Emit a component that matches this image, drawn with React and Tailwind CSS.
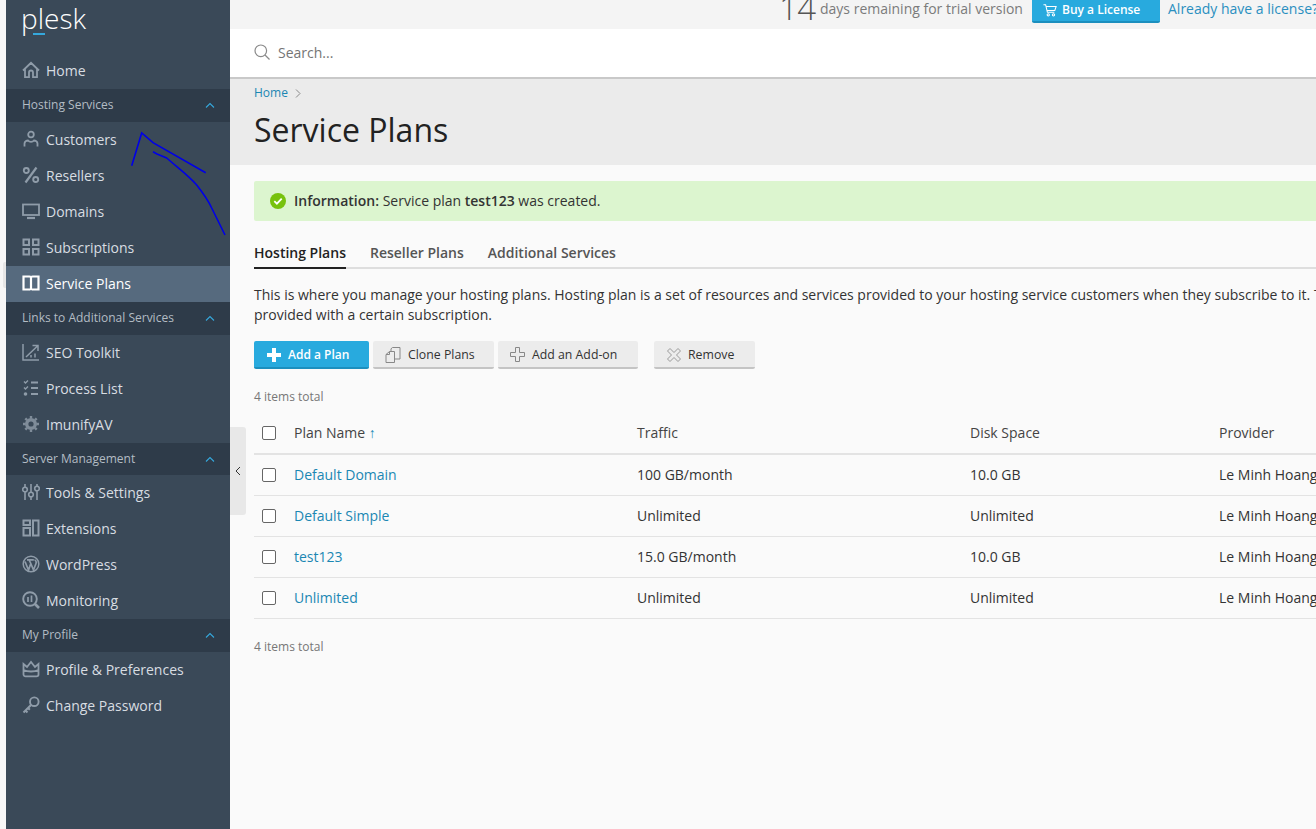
import React from "react";

const ic = { fill: "none", stroke: "#8f9ca9", strokeWidth: 1.8, viewBox: "0 0 18 18", width: 18, height: 18 };

const Icons = {
  home: <svg {...ic}><path d="M1 9.500 9 1.800l8 7.700M3 8v8.200h4v-4.700a2 2 0 0 1 4 0v4.700h4V8" /></svg>,
  user: <svg {...ic}><circle cx="9" cy="4.500" r="2.800" /><path d="M2.500 16.500v-3c0-2 2-3 3.500-3 .8 1 1.800 1.300 3 1.300s2.200-.3 3-1.300c1.500 0 3.500 1 3.500 3v3" /></svg>,
  percent: <svg {...ic} strokeWidth="2.200"><path d="M14.500 1.500 3.500 16.500" /><circle cx="4.300" cy="4.500" r="2.500" strokeWidth="1.900" /><circle cx="13.700" cy="13.500" r="2.500" strokeWidth="1.900" /></svg>,
  monitor: <svg {...ic}><rect x="1" y="2.500" width="16" height="10.500" /><path d="M5 16h8" strokeWidth="2.200" /></svg>,
  grid: <svg {...ic} strokeWidth="2"><rect x="1.500" y="1.500" width="5.500" height="5.500" /><rect x="11" y="1.500" width="5.500" height="5.500" /><rect x="1.500" y="11" width="5.500" height="5.500" /><rect x="11" y="11" width="5.500" height="5.500" /></svg>,
  book: <svg {...ic} stroke="#ffffff" strokeWidth="2.200"><path d="M1.500 2.500h6c.8 0 1.500.5 1.500 1.200 0-.7.700-1.200 1.500-1.200h6v13h-6c-.8 0-1.500.3-1.500.8 0-.5-.7-.8-1.500-.8h-6zM9 3.500v12.500" /></svg>,
  seo: <svg {...ic} strokeWidth="1.500"><path d="M1 1v16h16M4 14 15.500 3M10.500 2.500h5.500V8M9 14.500V12M13 14.500v-4" /></svg>,
  list: <svg {...ic}><path d="m2 2.500 1.500 1.500L6 1.500M2 8.500 3.500 10 6 7.500" strokeWidth="1.400" /><circle cx="3.500" cy="15" r="1.800" fill="#8f9ca9" stroke="none" /><path d="M9 3.500h7M9 9h7M9 15h7" strokeWidth="2" /></svg>,
  gear: <svg {...ic} stroke="#7f8c99"><circle cx="9" cy="9" r="4.300" strokeWidth="3.400" /><path d="M9 1v2.500M9 14.500V17M1 9h2.500M14.500 9H17M3.300 3.300l1.800 1.800M12.900 12.900l1.800 1.800M3.300 14.700l1.800-1.800M12.900 5.100l1.800-1.800" strokeWidth="2.400" /></svg>,
  sliders: <svg {...ic} strokeWidth="1.600"><path d="M3 1v3M3 9v8M9 1v8M9 14v3M15 1v2M15 8v9" /><circle cx="3" cy="6.500" r="2.300" /><circle cx="9" cy="11.500" r="2.300" /><circle cx="15" cy="5.500" r="2.300" /></svg>,
  ext: <svg {...ic} strokeWidth="2"><rect x="1.500" y="1.500" width="6.500" height="4.500" /><rect x="1.500" y="9" width="6.500" height="7.500" /><rect x="11" y="1.500" width="5.500" height="15" /></svg>,
  wp: <svg {...ic} strokeWidth="1.500"><circle cx="9" cy="9" r="7.800" /><path d="M3 6.500 6.500 15l2.300-6.500L7 4.800h4.800M5 4.800h3M8.800 8.500 11.500 15l2.500-6.500c.6-1.500-.2-3.300-1.500-3.500" strokeWidth="1.700" /></svg>,
  mon: <svg {...ic} strokeWidth="1.900"><circle cx="8" cy="8" r="6.800" /><path d="m13 13 4 4" strokeWidth="2.600" /><path d="M6 6v5M9.500 4.500V11" strokeWidth="1.700" /></svg>,
  crown: <svg {...ic}><path d="M1.500 4 5 7l4-5 4 5 3.500-3v10.500c0 1-1 1.800-2 1.800H3.500c-1 0-2-.8-2-1.800zM1.500 10c4 2 11 2 15 0" /></svg>,
  key: <svg {...ic}><circle cx="12.300" cy="5.700" r="4.300" strokeWidth="1.900" /><path d="M9 9 1.500 16.500M3.500 14.500l2 2M6 12l1.800 1.800" strokeWidth="2.100" /></svg>,
};

function Item({ icon, label, active }) {
  return (
    <div className={`h-9 flex items-center pl-4 pb-[2px] ${active ? "bg-[#566a7e] text-white" : "text-[#d8dde2]"}`}>
      <span className="w-6 flex items-center">{Icons[icon]}</span>
      <span className="text-[14px]">{label}</span>
    </div>
  );
}

function Section({ label, tall = true }) {
  return (
    <div className={`${tall ? "h-[33px] pb-[2px]" : "h-[32px]"} bg-[#2e3b49] flex items-center justify-between pl-4 pr-[15px] text-[#b3bcc4] text-[12px]`}>
      <span>{label}</span>
      <svg width="10" height="6" viewBox="0 0 10 6" fill="none" stroke="#35a8dc" strokeWidth="1.100"><path d="M1 5.500 5 1.500l4 4" /></svg>
    </div>
  );
}

function Btn({ icon, children, primary, className = "" }) {
  return (
    <div className={`h-[28px] pt-[1px] flex items-center gap-[7px] rounded-[2px] border-b-2 ${primary ? "bg-[#28aade] border-[#1c8fbe] text-white font-semibold text-[12px]" : "bg-[#ececec] border-[#c4c4c4] text-[#333] text-[12.300px]"} ${className}`}>
      {icon}
      <span className={primary ? "" : "pt-[2px]"}>{children}</span>
    </div>
  );
}

function Box() {
  return <span className="pl-2"><span className="block w-[14px] h-[14px] border border-[#666] rounded-[2px] bg-white" /></span>;
}

function Row({ name, traffic, disk }) {
  return (
    <div className="h-[41px] grid grid-cols-[40px_343px_333px_249px_200px] items-center border-b border-[#e3e3e3] text-[14px] text-[#333] whitespace-nowrap">
      <Box />
      <span className="pb-[2px] text-[#1b87b3]">{name}</span>
      <span className="pb-[2px]">{traffic}</span>
      <span className="pb-[2px]">{disk}</span>
      <span className="pb-[2px]">Le Minh Hoang</span>
    </div>
  );
}

export default function App() {
  return (
    <div className="relative w-[1316px] h-[829px] overflow-hidden flex bg-[#fafafa] text-[#333]" style={{ fontFamily: '"Open Sans", "Noto Sans", sans-serif' }}>
      <div className="w-[6px] shrink-0 bg-[#f7f7f7] pt-[262px]">
        <div className="ml-[3px] w-[3px] h-[26px] bg-[#e6e6e6] rounded-l-[2px]" />
      </div>

      <aside className="w-[224px] shrink-0 bg-[#3a4958] flex flex-col">
        <div className="h-[53px] pl-[15px] relative">
          <div className="text-[28px] font-light leading-[36px] text-white">plesk</div>
          <div className="absolute left-[27px] top-[33px] w-[12px] h-[2px] bg-[#35a8dc]" />
        </div>
        <Item icon="home" label="Home" />
        <Section label="Hosting Services" />
        <Item icon="user" label="Customers" />
        <Item icon="percent" label="Resellers" />
        <Item icon="monitor" label="Domains" />
        <Item icon="grid" label="Subscriptions" />
        <Item icon="book" label="Service Plans" active />
        <Section label="Links to Additional Services" />
        <Item icon="seo" label="SEO Toolkit" />
        <Item icon="list" label="Process List" />
        <Item icon="gear" label="ImunifyAV" />
        <Section label="Server Management" tall={false} />
        <Item icon="sliders" label="Tools & Settings" />
        <Item icon="ext" label="Extensions" />
        <Item icon="wp" label="WordPress" />
        <Item icon="mon" label="Monitoring" />
        <Section label="My Profile" />
        <Item icon="crown" label="Profile & Preferences" />
        <Item icon="key" label="Change Password" />
      </aside>

      <main className="flex-1 min-w-0 overflow-hidden flex flex-col">
        <div className="h-[29px] shrink-0 bg-[#f4f4f4] flex items-start pl-[549px] whitespace-nowrap">
          <span className="shrink-0 text-[33px] font-light leading-[36px] -mt-[10px] text-[#555] tracking-[-0.500px] w-[41px]">14</span>
          <span className="shrink-0 text-[14px] leading-[18px] text-[#7b7b7b] w-[212px]">days remaining for trial version</span>
          <div className="shrink-0 h-[23px] w-[128px] pb-[2px] bg-[#28aade] border-b-2 border-[#1c8fbe] rounded-b-[2px] flex items-center pl-[11px] gap-[5px] text-white text-[12px] font-semibold">
            <svg width="14" height="14" viewBox="0 0 16 16" fill="none" stroke="#fff" strokeWidth="1.200"><path d="M0.500 2h2.500l2 8.500h8M3.500 4h11.500l-1.500 4.500H5" /><circle cx="6" cy="13.500" r="1.300" /><circle cx="12" cy="13.500" r="1.300" /></svg>
            <span>Buy a License</span>
          </div>
          <span className="shrink-0 text-[14px] leading-[18px] text-[#2a8fc0] ml-2">Already have a license?</span>
        </div>

        <div className="h-[50px] shrink-0 bg-white border-b-2 border-[#c9c9c9] pb-[2px] flex items-center pl-6 gap-2">
          <svg width="16" height="16" viewBox="0 0 16 16" fill="none" stroke="#8a8a8a" strokeWidth="1.200"><circle cx="6.800" cy="6.800" r="5.800" /><path d="m11 11 4.500 4.500" /></svg>
          <span className="text-[14px] text-[#757575]">Search...</span>
        </div>

        <div className="h-[86px] shrink-0 bg-[#ebebeb] pl-6 pt-[6px]">
          <div className="flex items-center gap-[7px] text-[12px] leading-4 text-[#1b87b3]">
            <span>Home</span>
            <svg width="6" height="9" viewBox="0 0 6 9" fill="none" stroke="#888" strokeWidth="1"><path d="m1 .5 4 4-4 4" /></svg>
          </div>
          <h1 className="text-[32px] leading-[44px] mt-[7px] text-[#222]">Service Plans</h1>
        </div>

        <div className="pl-6 pt-4 whitespace-nowrap">
          <div className="h-10 bg-[#dcf5cf] rounded-l-[2px] flex items-center pl-4 gap-2 text-[14px] text-[#333]">
            <svg width="16" height="16" viewBox="0 0 16 16"><circle cx="8" cy="8" r="8" fill="#77c20d" /><path d="m4.300 8.200 2.600 2.500 4.800-5" fill="none" stroke="#fff" strokeWidth="1.800" /></svg>
            <span className="pb-[2px]"><span className="font-semibold">Information:</span> Service plan <span className="font-semibold">test123</span> was created.</span>
          </div>

          <div className="mt-[13px] h-[35px] flex gap-6 border-b-2 border-[#dedede] text-[14px] font-semibold text-[#555]">
            <div className="h-[35px] border-b-2 border-[#222] text-[#222] pt-[9px] leading-[19px]">Hosting Plans</div>
            <div className="pt-[9px] leading-[19px]">Reseller Plans</div>
            <div className="pt-[9px] leading-[19px]">Additional Services</div>
          </div>

          <p className="mt-4 text-[14px] leading-5">This is where you manage your hosting plans. Hosting plan is a set of resources and services provided to your hosting service customers when they subscribe to it. The<br />provided with a certain subscription.</p>

          <div className="mt-4 flex">
            <Btn primary className="w-[115px] pl-[13px]" icon={<svg width="14" height="14" viewBox="0 0 14 14" fill="#fff"><path d="M5 0h4v5h5v4H9v5H5V9H0V5h5z" /></svg>}>Add a Plan</Btn>
            <Btn className="w-[121px] ml-[4px] pl-[12px]" icon={<svg width="16" height="16" viewBox="0 0 16 16" fill="none" stroke="#888" strokeWidth="1"><path d="M4.500 4.500h5v11H1v-8zM4.500 4.500v3H1" /><path d="M6 4V1.800L7.500.5H15v11.500H9.500" /></svg>}>Clone Plans</Btn>
            <Btn className="w-[140px] ml-[4px] pl-[12px]" icon={<svg width="15" height="15" viewBox="0 0 15 15" fill="none" stroke="#888" strokeWidth="1"><path d="M5.500.5h4v5h5v4h-5v5h-4v-5h-5v-4h5z" /></svg>}>Add an Add-on</Btn>
            <Btn className="w-[101px] ml-[16px] pl-[13px]" icon={<svg width="14" height="14" viewBox="0 0 14 14" fill="none" stroke="#999" strokeWidth="1"><path d="M3 .5 7 4.500l4-4L13.500 3l-4 4 4 4-2.500 2.500-4-4-4 4L.5 11l4-4-4-4z" /></svg>}>Remove</Btn>
          </div>

          <div className="mt-5 text-[12px] leading-4 text-[#777]">4 items total</div>

          <div className="mt-[8px] h-[42px] grid grid-cols-[40px_343px_333px_249px_200px] items-center border-b-2 border-[#e3e3e3] text-[14px] text-[#444]">
            <Box />
            <span className="pb-[2px]">Plan Name <span className="text-[#1b87b3]">↑</span></span>
            <span className="pb-[2px]">Traffic</span>
            <span className="pb-[2px]">Disk Space</span>
            <span className="pb-[2px]">Provider</span>
          </div>
          <Row name="Default Domain" traffic="100 GB/month" disk="10.0 GB" />
          <Row name="Default Simple" traffic="Unlimited" disk="Unlimited" />
          <Row name="test123" traffic="15.0 GB/month" disk="10.0 GB" />
          <Row name="Unlimited" traffic="Unlimited" disk="Unlimited" />
          <div className="mt-[20px] text-[12px] leading-4 text-[#777]">4 items total</div>
        </div>
      </main>

      <div className="absolute left-[230px] top-[427px] w-[16px] h-[88px] bg-[#e8e8e8] rounded-r-[3px] flex items-center justify-center">
        <svg width="6" height="10" viewBox="0 0 6 10" fill="none" stroke="#333" strokeWidth="1"><path d="M5 1 1 5l4 4" /></svg>
      </div>

      <svg className="absolute left-0 top-0 pointer-events-none" width="240" height="240" fill="none" stroke="#0000e6" strokeWidth="1.600">
        <path d="M131.700 165.700 141.700 133 153 142.700 205.700 172.700" />
        <path d="M153 151.700 157 154 166.700 158C178 168 188 175 196.700 185 203 193 208 200 211.700 208L225 235" />
      </svg>
    </div>
  );
}
